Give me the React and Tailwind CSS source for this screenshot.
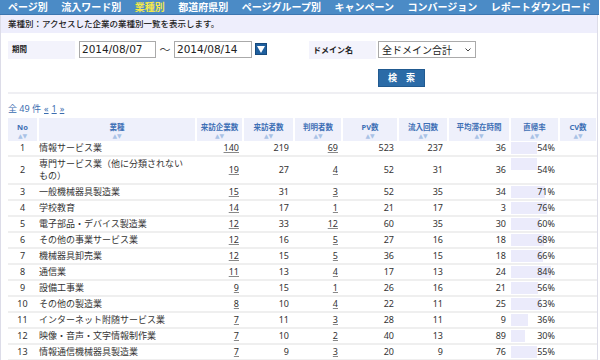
import React from 'react';

const navItems = ['ページ別', '流入ワード別', '業種別', '都道府県別', 'ページグループ別', 'キャンペーン', 'コンバージョン', 'レポートダウンロード'];

const columns = [
  { label: 'No' },
  { label: '業種' },
  { label: '来訪企業数' },
  { label: '来訪者数' },
  { label: '判明者数' },
  { label: 'PV数' },
  { label: '流入回数' },
  { label: '平均滞在時間' },
  { label: '直帰率' },
  { label: 'CV数' },
];

const rows = [
  [1, '情報サービス業', 140, 219, 69, 523, 237, 36, 54],
  [2, '専門サービス業（他に分類されないもの）', 19, 27, 4, 52, 31, 36, 54],
  [3, '一般機械器具製造業', 15, 31, 3, 52, 35, 34, 71],
  [4, '学校教育', 14, 17, 1, 21, 17, 3, 76],
  [5, '電子部品・デバイス製造業', 12, 33, 12, 60, 35, 30, 60],
  [6, 'その他の事業サービス業', 12, 16, 5, 27, 16, 18, 68],
  [7, '機械器具卸売業', 12, 15, 5, 36, 15, 18, 66],
  [8, '通信業', 11, 13, 4, 17, 13, 24, 84],
  [9, '設備工事業', 9, 15, 1, 26, 16, 21, 56],
  [10, 'その他の製造業', 8, 10, 4, 22, 11, 25, 63],
  [11, 'インターネット附随サービス業', 7, 11, 3, 28, 11, 9, 36],
  [12, '映像・音声・文字情報制作業', 7, 10, 2, 40, 13, 89, 30],
  [13, '情報通信機械器具製造業', 7, 9, 3, 20, 9, 76, 55],
];

const gridCols = 'grid grid-cols-[29px_156px_45px_49px_46px_54px_48px_60px_47px_36px] gap-x-[2px]';

export default function App() {
  return (
    <div className="w-[600px] h-[360px] overflow-hidden bg-white text-[#333] font-['Noto_Sans','Noto_Sans_CJK_JP',sans-serif]">
      {/* Nav */}
      <div className="w-[599px] h-[15px] bg-[#4b8bc6] border-b border-[#3c76b0] flex items-center gap-[13.5px] pl-[8px]">
        {navItems.map((item) => (
          <span
            key={item}
            className={`text-[10px] font-bold leading-[14px] whitespace-nowrap ${item === '業種別' ? 'text-[#f4e94a]' : 'text-white'}`}
          >
            {item}
          </span>
        ))}
      </div>

      <div className="w-[598px] border-r border-l border-[#dcdce8] h-[345px]">
        {/* Subtitle */}
        <div className="h-[18px] bg-[#eeeefc] flex items-center pl-[7px] text-[8.5px] text-[#222] font-medium">
          業種別：アクセスした企業の業種別一覧を表示します。
        </div>

        {/* Search form */}
        <div className="flex pl-[7px] pt-[8px]">
          <div className="w-[301px] flex items-start">
            <div className="w-[67px] h-[18px] bg-[#f3f3fc] flex items-center pl-[4px] text-[7.5px] font-bold text-[#222]">期間</div>
            <div className="ml-[4px] w-[77px] h-[17px] border border-[#aaa] flex items-center pl-[2px] text-[10.5px] font-['DejaVu_Sans',sans-serif] text-[#222]">2014/08/07</div>
            <span className="w-[18px] text-center text-[11px] leading-[17px] text-[#444]">～</span>
            <div className="w-[78px] h-[17px] border border-[#aaa] flex items-center pl-[2px] text-[10.5px] font-['DejaVu_Sans',sans-serif] text-[#222]">2014/08/14</div>
            <div className="ml-[3px] mt-[2px] w-[12px] h-[12px] bg-[#1f5f9e] border border-[#174a7d] flex items-center justify-center">
              <svg width="8" height="7" viewBox="0 0 8 7">
                <polygon points="0,0 8,0 4,7" fill="#fff" />
              </svg>
            </div>
          </div>
          <div className="grid grid-cols-[67px_98px] gap-x-[2px] gap-y-[10px]">
            <div className="h-[18px] bg-[#f3f3fc] flex items-center pl-[4px] text-[8px] font-bold text-[#222]">ドメイン名</div>
            <div className="h-[17px] border border-[#aaa] flex items-center justify-between pl-[3px] pr-[4px] text-[10px] text-[#222] font-['Noto_Sans_CJK_JP',sans-serif]">
              <span>全ドメイン合計</span>
              <svg width="6" height="4" viewBox="0 0 6 4">
                <polyline points="0.5,0.5 3,3 5.5,0.5" fill="none" stroke="#444" strokeWidth="1" />
              </svg>
            </div>
            <div />
            <div className="w-[47px] h-[18px] bg-[#2b6ba7] border border-[#215a90] flex items-center justify-center text-white text-[9px] font-bold tracking-[9px] pl-[9px]">
              検索
            </div>
          </div>
        </div>

        {/* Divider */}
        <div className="ml-[7px] mt-[5px] h-[2px] bg-[#efeff3]" />

        {/* Count / pager */}
        <div className="pl-[7px] pt-[9px] text-[9px] text-[#3a6db0] leading-[12px] flex gap-[3px]">
          <span>全 49 件</span>
          <span className="underline">«</span>
          <span className="underline">1</span>
          <span className="underline">»</span>
        </div>

        {/* Table */}
        <div className="pl-[7px] pt-[3px]">
          <div className={`${gridCols} h-[23px]`}>
            {columns.map((c) => (
              <div key={c.label} className="bg-[#eef0fb] flex flex-col items-center pt-[5px]">
                <span className="text-[7.5px] font-bold text-[#3d6fb5] leading-[9px] whitespace-nowrap">{c.label}</span>
                <span className="text-[6px] text-[#a9c2e6] leading-[8px] font-['DejaVu_Sans',sans-serif]">▲▼</span>
              </div>
            ))}
          </div>
          {rows.map((r) => (
            <div key={r[0]} className={`${gridCols} h-auto border-b-2 border-[#efefef] py-px text-[9px] leading-[12px] items-center`}>
              <div className="text-center">{r[0]}</div>
              <div className="pr-[4px]">{r[1]}</div>
              <div className="text-right pr-[3px]"><span className="underline decoration-[#888]">{r[2]}</span></div>
              <div className="text-right pr-[4px]">{r[3]}</div>
              <div className="text-right pr-[3px]"><span className="underline decoration-[#888]">{r[4]}</span></div>
              <div className="text-right pr-[3px]">{r[5]}</div>
              <div className="text-right pr-[4px]">{r[6]}</div>
              <div className="text-right pr-[3px]">{r[7]}</div>
              <div className="relative self-stretch flex items-center justify-end pr-[3px]">
                <div className="absolute left-0 top-0 h-[12px] bg-[#ebebfb]" style={{ width: `${r[8] * 0.48}px` }} />
                <span className="relative">{r[8]}%</span>
              </div>
              <div />
            </div>
          ))}
        </div>
      </div>
    </div>
  );
}
